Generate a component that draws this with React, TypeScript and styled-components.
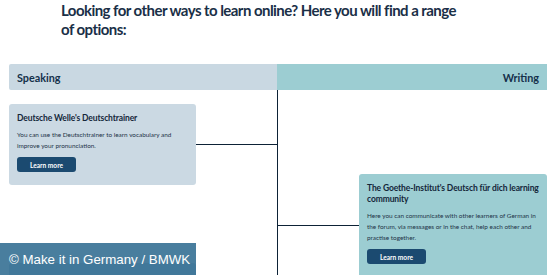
import styled, { createGlobalStyle } from 'styled-components';

const GlobalStyle = createGlobalStyle`
  html, body {
    margin: 0;
    padding: 0;
    background: #ffffff;
  }
  body {
    font-family: Lato, "Open Sans", sans-serif;
    color: #142a40;
  }
`;

const Page = styled.div`
  position: relative;
  width: 550px;
  height: 275px;
  overflow: hidden;
`;

const Title = styled.h2`
  margin: 0;
  padding: 1px 0 0 61px;
  width: 410px;
  font-size: 15px;
  line-height: 19px;
  font-weight: 700;
  letter-spacing: -0.55px;
  color: #1a2f47;
`;

const Bar = styled.div`
  display: grid;
  grid-template-columns: 268px 270px;
  margin: 25px 0 0 9px;
  height: 26px;
  border-radius: 2px;
  overflow: hidden;
`;

const BarCell = styled.div<{ $right?: boolean }>`
  display: flex;
  align-items: center;
  justify-content: ${(p) => (p.$right ? 'flex-end' : 'flex-start')};
  padding: 0 8px;
  background: ${(p) => (p.$right ? '#9ccdd2' : '#c9d8e2')};
  font-size: 10.8px;
  font-weight: 700;
  color: #14304a;
`;

const Timeline = styled.div`
  display: grid;
  grid-template-columns: 268px 270px;
  margin-left: 9px;
  height: 200px;
  background: linear-gradient(#0d2236, #0d2236) no-repeat 268px 0 / 1px 100%;
`;

const Column = styled.div<{ $offset: number }>`
  display: flex;
  flex-direction: column;
  gap: 78px;
  padding-top: ${(p) => p.$offset}px;
`;

const Entry = styled.div<{ $right?: boolean }>`
  display: flex;
  flex-direction: ${(p) => (p.$right ? 'row-reverse' : 'row')};
  align-items: center;
`;

const Connector = styled.div`
  flex: 1;
  height: 1px;
  background: #0d2236;
`;

const Card = styled.div<{ $right?: boolean }>`
  box-sizing: border-box;
  width: ${(p) => (p.$right ? 188 : 187)}px;
  min-height: 60px;
  padding: 9px 4px 13px 8px;
  border-radius: 3px;
  background: ${(p) => (p.$right ? '#9ccdd2' : '#cbd9e3')};
`;

const CardTitle = styled.h3`
  margin: 0 0 5px;
  font-size: 8.5px;
  line-height: 11px;
  font-weight: 700;
  letter-spacing: -0.12px;
  color: #14273a;
`;

const CardText = styled.p`
  margin: 0 0 6px;
  font-size: 6.4px;
  line-height: 11px;
  color: #1e3347;
`;

const Button = styled.a`
  display: flex;
  align-items: center;
  justify-content: center;
  width: 59px;
  height: 15px;
  border-radius: 3px;
  background: #1b4a70;
  color: #ffffff;
  font-size: 6.6px;
  font-weight: 700;
  text-decoration: none;
`;

const Caption = styled.div`
  position: absolute;
  left: 0;
  bottom: 0;
  width: 196px;
  height: 32px;
  display: flex;
  align-items: center;
  padding-left: 9px;
  box-sizing: border-box;
  background: rgba(38, 101, 139, 0.84);
  color: #ffffff;
  font-family: "Liberation Sans", Arial, sans-serif;
  font-size: 13.3px;
`;

export default function App() {
  return (
    <Page>
      <GlobalStyle />
      <Title>Looking for other ways to learn online? Here you will find a range of options:</Title>
      <Bar>
        <BarCell>Speaking</BarCell>
        <BarCell $right>Writing</BarCell>
      </Bar>
      <Timeline>
        <Column $offset={14}>
          <Entry>
            <Card>
              <CardTitle>Deutsche Welle's Deutschtrainer</CardTitle>
              <CardText>You can use the Deutschtrainer to learn vocabulary and improve your pronunciation.</CardText>
              <Button>Learn more</Button>
            </Card>
            <Connector />
          </Entry>
          <Entry>
            <Card />
            <Connector />
          </Entry>
        </Column>
        <Column $offset={84}>
          <Entry $right>
            <Card $right>
              <CardTitle>The Goethe-Institut's Deutsch für dich learning community</CardTitle>
              <CardText>
                Here you can communicate with other learners of German in the forum, via messages or in the chat, help each other and practise together.
              </CardText>
              <Button>Learn more</Button>
            </Card>
            <Connector />
          </Entry>
        </Column>
      </Timeline>
      <Caption>© Make it in Germany / BMWK</Caption>
    </Page>
  );
}
